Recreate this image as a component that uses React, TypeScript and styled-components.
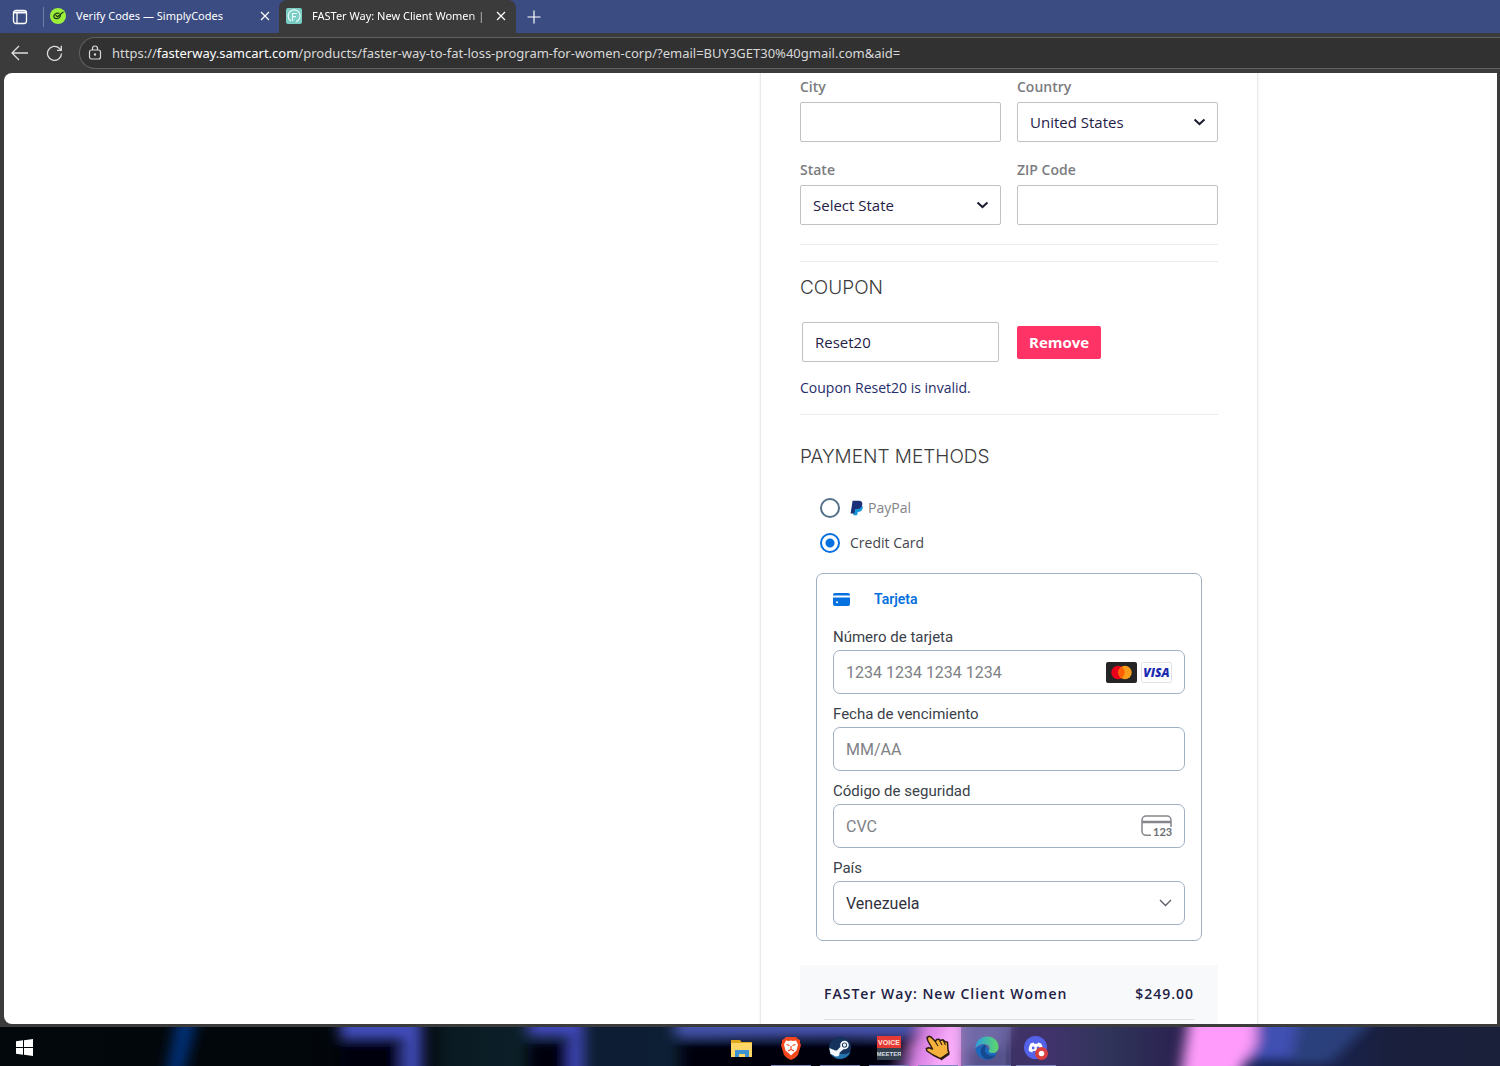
import React from "react";
import styled, { createGlobalStyle } from "styled-components";

const ui = `"Open Sans", "Noto Sans", sans-serif`;
const stripe = `Roboto, "Liberation Sans", sans-serif`;

const GlobalStyle = createGlobalStyle`
  *, *::before, *::after { box-sizing: border-box; }
  body { margin: 0; background: #3b3b3b; font-family: ${ui}; }
  button, input, select { font: inherit; margin: 0; }
  svg { display: block; flex: none; }
`;

const Desktop = styled.div`
  display: flex;
  flex-direction: column;
  height: 100vh;
  overflow: hidden;
`;

/* ---------- browser chrome ---------- */

const TabStrip = styled.div`
  display: flex;
  align-items: stretch;
  height: 33px;
  flex: none;
  background: #3b4c82;
  color: #fff;
`;

const IconButton = styled.button<{ $width: number; $color?: string }>`
  display: flex;
  align-items: center;
  justify-content: center;
  width: ${(p) => p.$width}px;
  padding: 0;
  border: 0;
  background: none;
  color: ${(p) => p.$color || "#fff"};
`;

const TabDivider = styled.span`
  width: 1px;
  height: 20px;
  margin: 7px 6px 0 3px;
  background: #6f7dab;
`;

const Tab = styled.div<{ $active?: boolean; $width: number }>`
  display: flex;
  align-items: center;
  width: ${(p) => p.$width}px;
  padding-left: ${(p) => (p.$active ? 7 : 0)}px;
  padding-bottom: 2px;
  border-radius: 8px 8px 0 0;
  background: ${(p) => (p.$active ? "#3b3b3b" : "transparent")};
`;

const TabTitle = styled.span`
  flex: 1;
  min-width: 0;
  margin-left: 10px;
  white-space: nowrap;
  font: 11px/18px "Noto Sans", sans-serif;
`;

const FadedTitle = styled(TabTitle)`
  mask-image: linear-gradient(to right, #000 90%, rgba(0, 0, 0, 0.5) 100%);
`;

const Toolbar = styled.div`
  display: flex;
  align-items: center;
  height: 40px;
  flex: none;
  padding-left: 1px;
  background: #3b3b3b;
`;

const AddressBar = styled.div`
  display: flex;
  flex: 1;
  align-items: center;
  height: 32px;
  margin-left: 7px;
  padding-left: 8px;
  border: 1px solid #626262;
  border-right: 0;
  border-radius: 16px 0 0 16px;
  background: #313131;
  color: #d8d8d8;
  font: 13px/20px "Noto Sans", sans-serif;
  white-space: nowrap;
`;

const Url = styled.span`
  margin-left: 10px;
`;

const Domain = styled.span`
  color: #fff;
`;

/* ---------- checkout page ---------- */

const Viewport = styled.main`
  flex: 1;
  min-height: 0;
  margin: 0 3px 3px 4px;
  overflow: hidden;
  border-radius: 8px 0 0 8px;
  background: #fff;
`;

const Container = styled.div`
  display: grid;
  grid-template-columns: minmax(0, 1fr) 498px;
  max-width: 1015px;
  margin: 0 auto;
`;

const Checkout = styled.form`
  grid-column: 2;
  padding: 4px 39px 24px;
  border: solid #eaeaec;
  border-width: 0 1px;
  box-shadow: 0 0 3px rgba(0, 0, 0, 0.07);
  color: #1f2145;
`;

const FieldGrid = styled.div`
  display: grid;
  grid-template-columns: 1fr 1fr;
  gap: 18px 16px;
  margin-bottom: 19px;
`;

const Field = styled.div`
  display: flex;
  flex-direction: column;
  gap: 5px;
`;

const Label = styled.label`
  color: #7b7c80;
  font-size: 14px;
  font-weight: 600;
  line-height: 20px;
`;

const TextBox = styled.input`
  width: 100%;
  height: 40px;
  padding: 0 12px;
  border: 1px solid #c1c2c6;
  border-radius: 2px;
  background: #fff;
  color: #1f2145;
  font-size: 15px;
`;

const SelectShell = styled.div`
  display: grid;
  align-items: center;
  > * { grid-area: 1 / 1; }
  > svg { justify-self: end; margin-right: 12px; pointer-events: none; }
`;

const SelectBox = styled.select`
  width: 100%;
  height: 40px;
  padding: 0 12px;
  border: 1px solid #c1c2c6;
  border-radius: 2px;
  background: #fff;
  color: #1f2145;
  font-size: 15px;
  appearance: none;
`;

const Rule = styled.hr<{ $after: number }>`
  height: 1px;
  margin: 0 0 ${(p) => p.$after}px;
  border: 0;
  background: #ececee;
`;

const Heading = styled.h2`
  margin: 0;
  color: #3c3c40;
  font: 300 19px/24px Inter, sans-serif;
`;

const CouponRow = styled.div`
  display: grid;
  grid-template-columns: 1fr 1fr;
  gap: 16px;
  align-items: center;
  margin: 22px 0 16px;
`;

const CouponCell = styled.div`
  padding: 0 2px;
`;

const RemoveButton = styled.button`
  justify-self: start;
  height: 33px;
  padding: 0 12px;
  border: 0;
  border-radius: 2px;
  background: #ff3366;
  color: #fff;
  font-size: 15px;
  font-weight: 700;
`;

const CouponMessage = styled.p`
  margin: 0 0 16px;
  color: #1f2d6b;
  font-size: 14px;
  line-height: 20px;
`;

const Methods = styled.div`
  display: flex;
  flex-direction: column;
  gap: 15px;
  margin: 29px 0 20px;
  padding-left: 20px;
`;

const Method = styled.label<{ $muted?: boolean }>`
  display: flex;
  align-items: center;
  color: ${(p) => (p.$muted ? "#828388" : "#44464c")};
  font-size: 14px;
  line-height: 20px;
  > svg { margin-right: 4px; }
`;

const Radio = styled.input`
  width: 20px;
  height: 20px;
  margin: 0 10px 0 0;
  border: 2px solid #56708a;
  border-radius: 50%;
  background: #fff;
  appearance: none;
  &:checked {
    border-color: #0570de;
    background: radial-gradient(circle, #0570de 0 4px, #fff 5px);
  }
`;

const CardBox = styled.section`
  display: flex;
  flex-direction: column;
  gap: 10px;
  margin: 0 16px 24px;
  padding: 15px 16px;
  border: 1px solid #9fb0c3;
  border-radius: 7px;
  font-family: ${stripe};
`;

const CardTitle = styled.h3`
  display: flex;
  align-items: center;
  gap: 24px;
  margin: 0 0 8px;
  color: #0570de;
  font: 600 14px/20px ${stripe};
`;

const CardField = styled.div`
  display: flex;
  flex-direction: column;
  gap: 3px;
`;

const CardLabel = styled.label`
  color: #3b3f49;
  font-size: 15px;
  line-height: 20px;
`;

const CardControl = styled.div`
  display: flex;
  align-items: center;
  gap: 4px;
  height: 44px;
  padding: 0 12px;
  border: 1px solid #9fb0c3;
  border-radius: 7px;
  background: #fff;
`;

const CardInput = styled.input`
  flex: 1;
  min-width: 0;
  padding: 0;
  border: 0;
  outline: 0;
  background: none;
  color: #30313d;
  font-size: 16px;
  &::placeholder { color: #808186; opacity: 1; }
`;

const CardSelect = styled.select`
  flex: 1;
  min-width: 0;
  padding: 0;
  border: 0;
  background: none;
  color: #30313d;
  font-size: 16px;
  appearance: none;
`;

const Summary = styled.div`
  padding: 19px 24px 24px;
  background: #f8f9fb;
`;

const SummaryLine = styled.div`
  display: flex;
  justify-content: space-between;
  padding-bottom: 15px;
  border-bottom: 1px solid #dcdee2;
  color: #1f2145;
  font-size: 14px;
  font-weight: 600;
  line-height: 20px;
  letter-spacing: 1px;
`;

/* ---------- desktop taskbar ---------- */

const Taskbar = styled.footer`
  position: relative;
  display: flex;
  height: 39px;
  flex: none;
  background: #02070b;
`;

const Wallpaper = styled.svg`
  position: absolute;
  inset: 0;
  width: 100%;
  height: 100%;
`;

const TaskSpacer = styled.span<{ $grow: number }>`
  flex: ${(p) => p.$grow} 1 0;
`;

const TaskButton = styled.button<{ $running?: boolean; $active?: boolean }>`
  position: relative;
  display: flex;
  align-items: center;
  justify-content: center;
  width: 48px;
  padding: 2px 0 0;
  border: 0;
  background: ${(p) => (p.$active ? "rgba(110, 120, 180, 0.3)" : "transparent")};
  &::after {
    content: "";
    position: absolute;
    right: ${(p) => (p.$active ? 0 : 4)}px;
    bottom: 0;
    left: ${(p) => (p.$active ? 0 : 4)}px;
    height: 1px;
    background: ${(p) => (p.$running ? "#7c86bd" : "transparent")};
  }
`;

const TaskGroup = styled.div`
  display: flex;
  gap: 1px;
`;

/* ---------- drawings ---------- */

const Cross = () => (
  <svg width="10" height="10" viewBox="0 0 10 10" stroke="currentColor" strokeWidth="1.2">
    <path d="M1 1l8 8M9 1l-8 8" />
  </svg>
);

const Chevron = () => (
  <svg width="13" height="8" viewBox="0 0 13 8" fill="none" stroke="#1c1e33" strokeWidth="2">
    <path d="M1.500 1.500l5 4.600 5-4.600" />
  </svg>
);

const SimplyLogo = () => (
  <svg width="16" height="16" viewBox="0 0 16 16">
    <circle cx="8" cy="8" r="8" fill="#9df03c" />
    <g fill="none" stroke="#1c3b14" strokeWidth="1.300" strokeLinecap="round" strokeLinejoin="round">
      <path d="M9 5.200C6 4.700 3.500 6.500 3.800 8.700c.3 2.300 3.800 2.600 5.500.9 1-.9 1.200-1.900 1-2.600" />
      <path d="M6 7.500l1.500 1.300L13 4.200" />
    </g>
  </svg>
);

const FasterLogo = () => (
  <svg width="16" height="16" viewBox="0 0 16 16">
    <rect width="16" height="16" rx="2" fill="#79cdc4" />
    <g fill="none" stroke="#e9fbf8" strokeWidth="1.200">
      <path d="M5 13A6 6 0 1 1 10 13.600" />
      <path d="M6.500 13V5.500H11M6.500 8.700H10" />
    </g>
  </svg>
);

const PayPalMark = () => (
  <svg width="14" height="16" viewBox="0 0 14 16">
    <path d="M4.500 5h6.800c1.700 1 1.800 3 .8 4.800-.9 1.600-2.400 2.100-4.300 2.100l-.7 3.400H3.300z" fill="#1797d8" />
    <path d="M2.600.8h6.200c2.700 0 4 1.600 3.400 4C11.600 7.700 9.800 9 7.300 9H5.200l-.8 4.600H.6z" fill="#1d3178" />
  </svg>
);

const CardIcon = () => (
  <svg width="17" height="13" viewBox="0 0 17 13" fill="#0570de">
    <path d="M2 0h13a2 2 0 0 1 2 2v.500H0V2a2 2 0 0 1 2-2z" />
    <path fillRule="evenodd" d="M0 4.500h17V11a2 2 0 0 1-2 2H2a2 2 0 0 1-2-2zM4 8.300a1 1 0 1 0 0 2 1 1 0 0 0 0-2z" />
  </svg>
);

const Mastercard = () => (
  <svg width="31" height="21" viewBox="0 0 31 21">
    <rect width="31" height="21" rx="2" fill="#252525" />
    <circle cx="12" cy="10.500" r="6.700" fill="#eb001b" />
    <circle cx="19" cy="10.500" r="6.700" fill="#f79e1b" />
    <path d="M15.500 4.800a6.700 6.700 0 0 1 0 11.400 6.700 6.700 0 0 1 0-11.400z" fill="#ff5f00" />
  </svg>
);

const Visa = () => (
  <svg width="31" height="21" viewBox="0 0 31 21">
    <rect x=".5" y=".5" width="30" height="20" rx="2" fill="#fff" stroke="#dfe1e6" />
    <text x="15.500" y="15" textAnchor="middle" fill="#1a2bb0" fontFamily="Open Sans" fontSize="12" fontWeight="800" fontStyle="italic">VISA</text>
  </svg>
);

const CvcIcon = () => (
  <svg width="31" height="22" viewBox="0 0 31 22" fill="none" stroke="#85868c">
    <path d="M10 20.300H5A4 4 0 0 1 1 16.300V5A4 4 0 0 1 5 1h21a4 4 0 0 1 4 4v7" strokeWidth="1.500" />
    <path d="M1 7h29" strokeWidth="2.500" />
    <text x="12" y="21" fill="#6d6e75" stroke="none" fontFamily="Lato" fontSize="11" fontWeight="700">123</text>
  </svg>
);

const Streaks = () => (
  <Wallpaper viewBox="0 0 1500 39" preserveAspectRatio="none" aria-hidden="true">
    <defs>
      <filter id="soft" x="-20%" y="-50%" width="140%" height="200%"><feGaussianBlur stdDeviation="7 5" /></filter>
      <linearGradient id="ground">
        <stop offset="0" stopColor="#02080b" />
        <stop offset=".28" stopColor="#02060b" />
        <stop offset=".3" stopColor="#0a1a22" />
        <stop offset=".35" stopColor="#0c2029" />
        <stop offset=".4" stopColor="#0d1d33" />
        <stop offset=".46" stopColor="#0d2036" />
        <stop offset=".56" stopColor="#01020a" />
        <stop offset=".62" stopColor="#2c2255" />
        <stop offset=".66" stopColor="#3a3060" />
        <stop offset=".7" stopColor="#41336c" />
        <stop offset=".74" stopColor="#2f3459" />
        <stop offset=".79" stopColor="#2a204f" />
        <stop offset=".84" stopColor="#1a2760" />
        <stop offset=".93" stopColor="#191f3c" />
        <stop offset="1" stopColor="#1b203a" />
      </linearGradient>
    </defs>
    <rect width="1500" height="39" fill="url(#ground)" />
    <g filter="url(#soft)">
      <path d="M178-12h20l-16 62h-16z" fill="#04307c" />
      <path d="M340 16h58v36h-58zM528 16h42v36h-42zM680 14h240l-50 38H680z" fill="#01020a" />
      <path d="M340-14h82v66h-20V12h-62z" fill="#3f4cb8" />
      <path d="M528-14h56v66h-15V9h-41z" fill="#4046b8" />
      <path d="M675-14h255l-20 24H675z" fill="#4453ac" />
      <path d="M925-14h42v66h-66z" fill="#df86e8" />
      <path d="M950-14h12v66h-36z" fill="#fbaefb" />
      <path d="M962-14h50l-10 36h-40z" fill="#8b76ba" />
      <path d="M1255-14h120l-60 46h-70z" fill="#4150b2" />
      <path d="M1300-14h80l-50 50h-40z" fill="#2c417c" />
      <path d="M1190-14h66v30l-20 36h-56z" fill="#ff9cfb" />
    </g>
    <path d="M961 0h45v39h-45z" fill="#5b5490" opacity=".55" />
  </Wallpaper>
);

const tasks = [
  {
    name: "File Explorer",
    icon: (
      <svg width="22" height="18" viewBox="0 0 22 18">
        <path d="M0 1h9l1.500 2H21v14H0z" fill="#e0a81f" />
        <path d="M0 4h21v14H0z" fill="#fcd667" />
        <path d="M4 18v-7h14v7h-4v-3H8v3z" fill="#3d93cf" />
      </svg>
    ),
  },
  {
    name: "Brave",
    running: true,
    icon: (
      <svg width="22" height="24" viewBox="0 0 22 24">
        <path d="M6 1h10l2 2 2 1v3l1 2-3 10-3 3-4 2-4-2-3-3L1 9l1-2V4l2-1z" fill="#f4471e" />
        <path d="M6 4.500l3 .5 2-.5 2 .5 3-.5 2 4-1.500 6-3.500 3-2 2-2-2-3.500-3L4 8.500z" fill="#fff" />
        <path d="M6.500 8.500l3 1M15.500 8.500l-3 1M11 10v4M8 15l3-1.500L14 15" fill="none" stroke="#f4471e" strokeWidth="1.200" />
      </svg>
    ),
  },
  {
    name: "Steam",
    running: true,
    icon: (
      <svg width="24" height="24" viewBox="0 0 24 24">
        <circle cx="12" cy="12" r="11" fill="#14325c" />
        <path d="M1.500 14.500a11 11 0 0 0 21 1.500c-3 2-8 3-13 1z" fill="#2471ad" />
        <path d="M1.300 12l7.200 3 5.500-6 3 3-6.500 5.500-3 2.500-5-2z" fill="#f3f6fa" />
        <circle cx="16.500" cy="9" r="4.300" fill="#f3f6fa" />
        <circle cx="16.500" cy="9" r="2.600" fill="#14325c" />
        <circle cx="16.500" cy="9" r="1.700" fill="#f3f6fa" />
        <circle cx="8.500" cy="17.500" r="3" fill="#f3f6fa" />
      </svg>
    ),
  },
  {
    name: "Voicemeeter",
    running: true,
    icon: (
      <svg width="24" height="24" viewBox="0 0 24 24">
        <rect width="24" height="12" fill="#e63a35" />
        <rect y="12" width="24" height="12" fill="#34414e" />
        <g fontFamily="Liberation Sans" fontWeight="700" textAnchor="middle">
          <text x="12" y="9" fontSize="7" fill="#ffe4de">VOICE</text>
          <text x="12" y="20" fontSize="6" fill="#d5dce2">MEETER</text>
        </g>
      </svg>
    ),
  },
  {
    name: "Clicker",
    running: true,
    icon: (
      <svg width="26" height="26" viewBox="0 0 26 26">
        <path d="M2 2.500l2-1.200 2 .7 4.500 4.500 1-2 2.500-.3 1.500 1.300 2.500-.8 1.800 1.800 2.700.7L23 15l1 3-8 5.500-2-.5-6-3-6-4-.7-2.500 2.500-.8L7.500 14 3 6z" fill="#f6b13c" stroke="#2c1d10" strokeWidth="1.500" strokeLinejoin="round" />
        <path d="M10.500 7l2.500 4M14.500 5.500l2.500 4.500M18.500 6l2 4" stroke="#2c1d10" strokeWidth="1.100" fill="none" />
        <path d="M15.500 24.500l8.500-6" stroke="#2c1d10" strokeWidth="2.500" />
      </svg>
    ),
  },
  {
    name: "Edge",
    running: true,
    active: true,
    icon: (
      <svg width="24" height="24" viewBox="0 0 24 24">
        <defs>
          <linearGradient id="edge-top"><stop offset="0" stopColor="#2b9fe0" /><stop offset="1" stopColor="#5fd66b" /></linearGradient>
        </defs>
        <path d="M.5 12a11.500 11.500 0 0 0 19 8.800l2-3.300-6-2L9 8z" fill="#1b68bd" />
        <path d="M.5 11C1.500 4 6.500.5 12 .5c7 0 11.500 5 11.500 10.500 0 4-3 6-6 6-4 0-4.500-1.800-3.500-3 1.500-2 0-6-4.500-6C5 8 1.500 9.500.5 13z" fill="url(#edge-top)" />
        <path d="M10 9c-5 2-6 9-1 13 4 2.500 9 1 12-3-5 2-12 0-11-6 .2-1.500 1-2 1.500-3z" fill="#154a91" />
      </svg>
    ),
  },
  {
    name: "Discord",
    running: true,
    icon: (
      <svg width="24" height="24" viewBox="0 0 24 24">
        <circle cx="11.500" cy="11.500" r="11.500" fill="#5462ea" />
        <path d="M6.500 7.500l3-1 .8 1.200h3l.8-1.200 3 1c1.500 2.500 2 5 1.700 7.500l-3.300 1.500-1-1.500h-5.400l-1 1.500L4.800 15c-.3-2.500.2-5 1.700-7.500z" fill="#fff" />
        <circle cx="9.200" cy="12" r="1.400" fill="#5462ea" />
        <circle cx="14" cy="12" r="1.400" fill="#5462ea" />
        <circle cx="17.500" cy="17.500" r="6.500" fill="#d8403f" />
        <circle cx="17.500" cy="17.500" r="2.800" fill="#fff" />
      </svg>
    ),
  },
];

const cardFields = [
  { id: "number", label: "Número de tarjeta", hint: "1234 1234 1234 1234", extra: <><Mastercard /><Visa /></> },
  { id: "expiry", label: "Fecha de vencimiento", hint: "MM/AA" },
  { id: "cvc", label: "Código de seguridad", hint: "CVC", extra: <CvcIcon /> },
];

function Browser() {
  return (
    <>
      <TabStrip>
        <IconButton $width={40} aria-label="Tab actions">
          <svg width="16" height="16" viewBox="0 0 16 16" fill="none" stroke="currentColor" strokeWidth="1.300">
            <rect x="1.500" y="1.500" width="13" height="13" rx="2.500" />
            <path d="M1.500 3.500h13" strokeWidth="2" />
            <path d="M5 4v10.500" />
          </svg>
        </IconButton>
        <TabDivider />
        <Tab $width={229}>
          <SimplyLogo />
          <TabTitle>Verify Codes — SimplyCodes</TabTitle>
          <IconButton $width={28} aria-label="Close tab"><Cross /></IconButton>
        </Tab>
        <Tab $active $width={237}>
          <FasterLogo />
          <FadedTitle>FASTer Way: New Client Women |</FadedTitle>
          <IconButton $width={30} aria-label="Close tab"><Cross /></IconButton>
        </Tab>
        <IconButton $width={36} aria-label="New tab">
          <svg width="14" height="14" viewBox="0 0 14 14" stroke="currentColor" strokeWidth="1.200">
            <path d="M7 .5v13M.5 7h13" />
          </svg>
        </IconButton>
      </TabStrip>
      <Toolbar>
        <IconButton $width={36} $color="#dedede" aria-label="Back">
          <svg width="17" height="16" viewBox="0 0 17 16" fill="none" stroke="currentColor" strokeWidth="1.300">
            <path d="M8 1L1 8l7 7M1 8h16" />
          </svg>
        </IconButton>
        <IconButton $width={35} $color="#dedede" aria-label="Refresh">
          <svg width="17" height="17" viewBox="0 0 17 17" fill="none" stroke="currentColor" strokeWidth="1.300">
            <path d="M15.500 8.500a7 7 0 1 1-2-5L15 5" />
            <path d="M15.300.8V5.300H11" />
          </svg>
        </IconButton>
        <AddressBar>
          <svg width="14" height="16" viewBox="0 0 14 16" fill="none" stroke="#d8d8d8" strokeWidth="1.200">
            <rect x="1.500" y="5" width="11" height="9" rx="2" />
            <path d="M4.500 5V3.500a2.500 2.500 0 0 1 5 0V5" />
            <circle cx="7" cy="9.500" r=".6" fill="#d8d8d8" />
          </svg>
          <Url>https://<Domain>fasterway.samcart.com</Domain>/products/faster-way-to-fat-loss-program-for-women-corp/?email=BUY3GET30%40gmail.com&amp;aid=</Url>
        </AddressBar>
      </Toolbar>
    </>
  );
}

export default function App() {
  return (
    <Desktop>
      <GlobalStyle />
      <Browser />
      <Viewport>
        <Container>
          <Checkout>
            <FieldGrid>
              <Field>
                <Label htmlFor="city">City</Label>
                <TextBox id="city" />
              </Field>
              <Field>
                <Label htmlFor="country">Country</Label>
                <SelectShell>
                  <SelectBox id="country"><option>United States</option></SelectBox>
                  <Chevron />
                </SelectShell>
              </Field>
              <Field>
                <Label htmlFor="state">State</Label>
                <SelectShell>
                  <SelectBox id="state"><option>Select State</option></SelectBox>
                  <Chevron />
                </SelectShell>
              </Field>
              <Field>
                <Label htmlFor="zip">ZIP Code</Label>
                <TextBox id="zip" />
              </Field>
            </FieldGrid>
            <Rule $after={16} />
            <Rule $after={14} />

            <Heading>COUPON</Heading>
            <CouponRow>
              <CouponCell><TextBox aria-label="Coupon code" defaultValue="Reset20" /></CouponCell>
              <RemoveButton type="button">Remove</RemoveButton>
            </CouponRow>
            <CouponMessage>Coupon Reset20 is invalid.</CouponMessage>
            <Rule $after={30} />

            <Heading>PAYMENT METHODS</Heading>
            <Methods>
              <Method $muted>
                <Radio type="radio" name="method" />
                <PayPalMark />
                PayPal
              </Method>
              <Method>
                <Radio type="radio" name="method" defaultChecked />
                Credit Card
              </Method>
            </Methods>

            <CardBox>
              <CardTitle><CardIcon />Tarjeta</CardTitle>
              {cardFields.map((f) => (
                <CardField key={f.id}>
                  <CardLabel htmlFor={f.id}>{f.label}</CardLabel>
                  <CardControl>
                    <CardInput id={f.id} placeholder={f.hint} />
                    {f.extra}
                  </CardControl>
                </CardField>
              ))}
              <CardField>
                <CardLabel htmlFor="pais">País</CardLabel>
                <CardControl>
                  <CardSelect id="pais"><option>Venezuela</option></CardSelect>
                  <svg width="13" height="8" viewBox="0 0 13 8" fill="none" stroke="#5d5f69" strokeWidth="1.400">
                    <path d="M1 1l5.500 5.500L12 1" />
                  </svg>
                </CardControl>
              </CardField>
            </CardBox>

            <Summary>
              <SummaryLine>
                <span>FASTer Way: New Client Women</span>
                <span>$249.00</span>
              </SummaryLine>
            </Summary>
          </Checkout>
        </Container>
      </Viewport>
      <Taskbar>
        <Streaks />
        <TaskButton aria-label="Start">
          <svg width="17" height="17" viewBox="0 0 17 17" fill="#fff">
            <path d="M0 2.300L7 1.300V8H0zM8 1.200L17 0v8H8zM0 9h7v6.700L0 14.700zM8 9h9v8l-9-1.200z" />
          </svg>
        </TaskButton>
        <TaskSpacer $grow={67} />
        <TaskGroup>
          {tasks.map((t) => (
            <TaskButton key={t.name} aria-label={t.name} $running={t.running} $active={t.active}>{t.icon}</TaskButton>
          ))}
        </TaskGroup>
        <TaskSpacer $grow={44} />
      </Taskbar>
    </Desktop>
  );
}
